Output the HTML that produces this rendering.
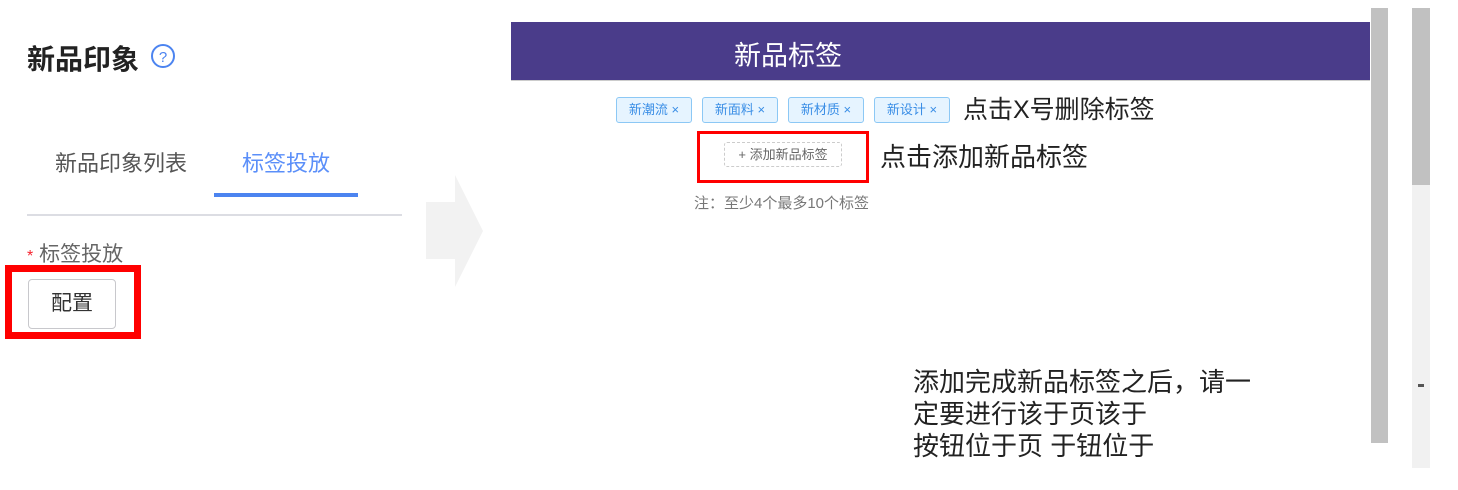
<!DOCTYPE html>
<html><head><meta charset="utf-8"><style>
body{margin:0;width:1458px;height:490px;background:#fff;position:relative;overflow:hidden;font-family:"Liberation Sans","Noto Sans CJK SC",sans-serif}
.a{position:absolute;white-space:nowrap}
.tag{position:absolute;top:97px;height:24px;width:74px;border:1px solid #8cc8f5;background:#e6f4ff;border-radius:3px;color:#3a8ee6;font-size:13px;line-height:24px;text-align:center}
.big{font-size:25px;color:#222;line-height:30px}
</style></head><body>
<div class="a" style="left:27px;top:38px;font-size:28px;font-weight:bold;color:#222">新品印象</div>
<svg class="a" style="left:150px;top:43px" width="26" height="26"><circle cx="13" cy="13" r="11" fill="none" stroke="#4c84f0" stroke-width="2"/><text x="13" y="19" text-anchor="middle" font-size="15" fill="#4c84f0" font-family="Liberation Sans">?</text></svg>
<div class="a" style="left:55px;top:146px;font-size:22px;color:#555">新品印象列表</div>
<div class="a" style="left:242px;top:146px;font-size:22px;color:#5b8ff9">标签投放</div>
<div class="a" style="left:214px;top:193px;width:144px;height:4px;background:#4c84f0"></div>
<div class="a" style="left:27px;top:214px;width:375px;height:2px;background:#dcdde3"></div>
<div class="a" style="left:27px;top:238px;font-size:21px;color:#666"><span style="color:#f5222d;font-size:16px">*</span> 标签投放</div>
<div class="a" style="left:5px;top:265px;width:122px;height:60px;border:7px solid #f00"></div>
<div class="a" style="left:28px;top:279px;width:86px;height:48px;border:1px solid #c8c8cc;border-radius:4px;font-size:21px;line-height:48px;text-align:center;color:#333">配置</div>
<svg class="a" style="left:426px;top:175px" width="58" height="113"><polygon points="0,27 29,27 29,0 57,56 29,112 29,84 0,84" fill="#f2f2f2"/></svg>
<div class="a" style="left:511px;top:22px;width:859px;height:58px;background:#4a3c8a;border-bottom:1px solid #ccc"></div>
<div class="a" style="left:734px;top:34px;font-size:27px;color:#fff">新品标签</div>
<div class="tag" style="left:616px">新潮流 ×</div>
<div class="tag" style="left:702px">新面料 ×</div>
<div class="tag" style="left:788px">新材质 ×</div>
<div class="tag" style="left:874px">新设计 ×</div>
<div class="a big" style="left:963px;top:95px">点击X号删除标签</div>
<div class="a" style="left:697px;top:131px;width:166px;height:46px;border:3px solid #f00"></div>
<div class="a" style="left:724px;top:142px;width:116px;height:23px;border:1px dashed #ccc;border-radius:3px;font-size:13px;color:#666;line-height:23px;text-align:center">+ 添加新品标签</div>
<div class="a big" style="left:880px;top:142px;font-size:26px">点击添加新品标签</div>
<div class="a" style="left:694px;top:192px;font-size:15px;color:#777">注：至少4个最多10个标签</div>
<div class="a big" style="left:913px;top:366px;line-height:32px;font-size:26px;white-space:normal;width:380px">添加完成新品标签之后，请一<br>定要进行该于页该于<br>按钮位于页 于钮位于</div>
<div class="a" style="left:1371px;top:8px;width:17px;height:435px;background:#c1c1c1"></div>
<div class="a" style="left:1412px;top:8px;width:18px;height:460px;background:#f1f1f1"></div>
<div class="a" style="left:1412px;top:8px;width:18px;height:177px;background:#c1c1c1"></div>
<div class="a" style="left:1418px;top:384px;width:6px;height:3px;background:#555"></div>
</body></html>
